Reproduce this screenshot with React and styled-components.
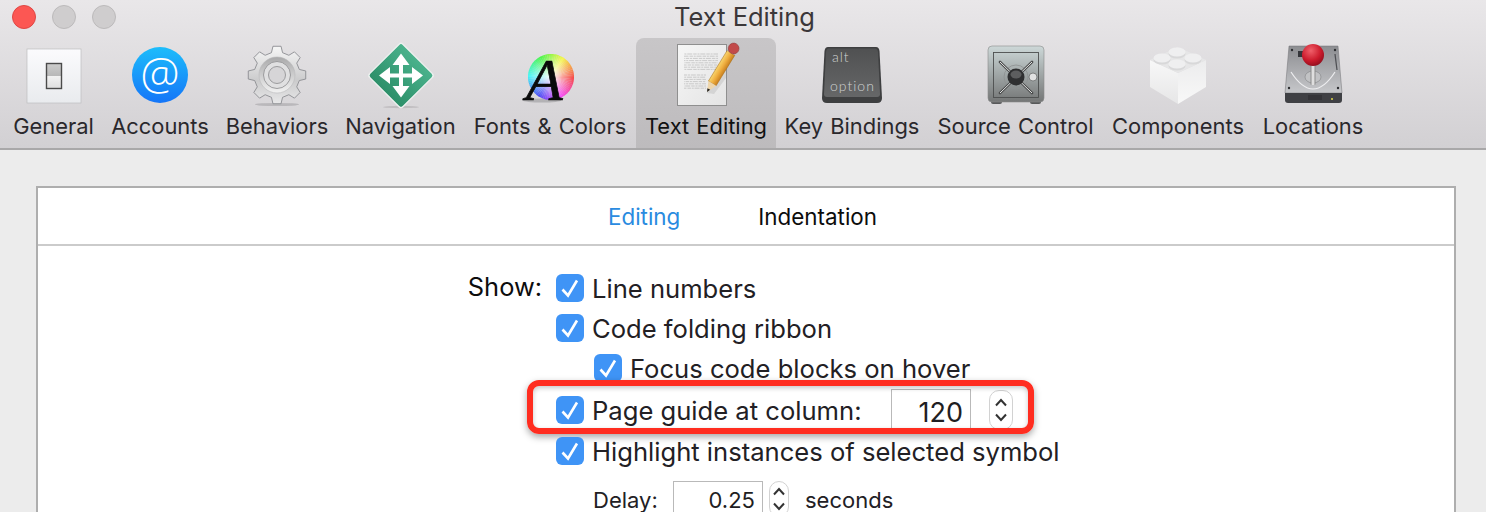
import React from 'react';
import styled, { createGlobalStyle } from 'styled-components';

const UI_FONT = `Inter, "Liberation Sans", sans-serif`;

const GlobalStyle = createGlobalStyle`
  html, body {
    margin: 0;
    height: 512px;
    overflow: hidden;
    background: #ececec;
    font-family: ${UI_FONT};
  }
`;

const Window = styled.div`
  width: 1486px;
  height: 512px;
  overflow: hidden;
  background: #ececec;
`;

const Toolbar = styled.header`
  height: 148px;
  background: linear-gradient(#e9e7e9, #d2d0d3);
  border-bottom: 2px solid #a9a8a9;
`;

const TitleBar = styled.div`
  height: 38px;
  display: grid;
  grid-template-columns: 1fr auto 1fr;
  align-items: center;
  padding: 0 9px 4px 12px;
  box-sizing: border-box;
`;

const Lights = styled.div`
  display: flex;
  gap: 16px;
`;

const Light = styled.span`
  width: 24px;
  height: 24px;
  border-radius: 50%;
  box-sizing: border-box;
  background: ${p => (p.$on ? '#fc5753' : '#cfcdce')};
  border: 1px solid ${p => (p.$on ? '#df4744' : '#bcbabb')};
`;

const Title = styled.h1`
  margin: 0 0 2px;
  font-size: 25.5px;
  font-weight: 400;
  color: #3b3739;
`;

const Tabs = styled.nav`
  display: flex;
  height: 110px;
  padding-left: 4px;
`;

const Tab = styled.div`
  width: ${p => p.$w}px;
  height: 110px;
  flex: none;
  display: flex;
  flex-direction: column;
  align-items: center;
  background: ${p => (p.$active ? 'linear-gradient(#c8c6c8, #bdbbbd)' : 'transparent')};
  border-radius: 8px 8px 0 0;
`;

const IconSvg = styled.svg`
  width: 64px;
  height: 64px;
  margin-top: 6px;
  flex: none;
  display: block;
  overflow: visible;
`;

const TabLabel = styled.span`
  margin-top: 3px;
  font-size: 21.9px;
  word-spacing: 1px;
  line-height: 30px;
  white-space: nowrap;
  color: ${p => (p.$active ? '#111' : '#2a282c')};
`;

const KeyText = styled.text`
  font-family: Lato, sans-serif;
  font-size: 14px;
  font-weight: 300;
  letter-spacing: 1px;
  fill: #d0d2d2;
`;

const AtText = styled.text`
  font-family: "Open Sans", sans-serif;
  font-size: 44px;
  font-weight: 300;
  fill: #fff;
`;

const SerifA = styled.text`
  font-family: "Liberation Serif", serif;
  font-size: 60px;
  font-style: italic;
  fill: #0a0a0a;
  stroke: #0a0a0a;
  stroke-width: 0.7px;
`;

const Panel = styled.section`
  margin: 36px 30px 0 36px;
  height: 400px;
  background: #fff;
  border: 2px solid #aeaeae;
  border-bottom: 0;
`;

const SegBar = styled.div`
  height: 56px;
  display: flex;
  align-items: center;
  padding-left: 570px;
  gap: 78px;
  border-bottom: 2px solid #cbcbcb;
`;

const Seg = styled.span`
  font-size: 22.4px;
  color: ${p => (p.$active ? '#2a8be0' : '#0c0c0c')};
`;

const Form = styled.div`
  display: grid;
  grid-template-columns: 504px 1fr;
  column-gap: 14px;
  padding-top: 22px;
`;

const FormLabel = styled.div`
  text-align: right;
  font-size: 25.4px;
  line-height: 38px;
  color: #0d0d0d;
`;

const Options = styled.div`
  display: flex;
  flex-direction: column;
`;

const Row = styled.div`
  position: relative;
  height: 40px;
  display: flex;
  align-items: center;
  gap: 8px;
  margin-top: ${p => p.$top || 0}px;
  padding-left: ${p => p.$indent || 0}px;
  font-size: 25.6px;
  color: #222024;
  white-space: nowrap;
`;

const Check = styled.span`
  width: 28px;
  height: 28px;
  flex: none;
  border-radius: 6px;
  background: #3f94f6;
`;

const CheckMark = styled.svg`
  width: 28px;
  height: 28px;
  display: block;
`;

const GuideLabel = styled.span`
  width: 291px;
`;

const NumberField = styled.div`
  width: ${p => p.$w}px;
  height: ${p => p.$h}px;
  box-sizing: border-box;
  flex: none;
  border: 1px solid #b9b9b9;
  background: #fff;
  display: flex;
  align-items: center;
  justify-content: flex-end;
  padding: ${p => p.$dy || 0}px 7px 0 0;
  font-size: ${p => p.$size}px;
  line-height: 24px;
  color: #1f1e22;
`;

const Stepper = styled.div`
  width: ${p => p.$w}px;
  height: ${p => p.$h}px;
  flex: none;
  box-sizing: border-box;
  margin-left: ${p => p.$gap}px;
  border: 1px solid #d2d2d2;
  border-radius: 10px;
  background: #fff;
  display: flex;
  flex-direction: column;
  align-items: center;
  justify-content: center;
  gap: 6px;
`;

const Chevron = styled.svg`
  width: 14px;
  height: 9px;
  display: block;
`;

const Callout = styled.div`
  position: absolute;
  left: -29px;
  top: -10px;
  width: 507px;
  height: 54px;
  box-sizing: border-box;
  border: 6px solid #ff2d20;
  border-radius: 12px;
  box-shadow: 0 3px 7px rgba(0, 0, 0, 0.35), inset 0 2px 5px rgba(0, 0, 0, 0.22);
  pointer-events: none;
`;

const DelayRow = styled.div`
  display: flex;
  align-items: flex-start;
  height: 31px;
  margin-top: 10px;
  padding-left: 37px;
  font-size: 22px;
  color: #222024;
`;

const DelayText = styled.span`
  line-height: 24px;
  margin-top: 7px;
  width: ${p => p.$w || 'auto'};
  margin-left: ${p => p.$gap || 0}px;
`;

const polar = (cx, cy, r, deg) => {
  const a = (deg * Math.PI) / 180;
  return `${(cx + r * Math.cos(a)).toFixed(2)},${(cy + r * Math.sin(a)).toFixed(2)}`;
};

const gearPoints = (() => {
  const pts = [];
  for (let i = 0; i < 8; i++) {
    const c = i * 45 - 90;
    pts.push(polar(32, 31, 23, c - 14), polar(32, 31, 29, c - 8), polar(32, 31, 29, c + 8), polar(32, 31, 23, c + 14));
  }
  return pts.join(' ');
})();

const IconGeneral = () => (
  <IconSvg viewBox="0 0 64 64">
    <defs>
      <linearGradient id="genBg" x1="0" y1="0" x2="0" y2="1">
        <stop offset="0" stopColor="#fbfbfd" />
        <stop offset="1" stopColor="#e9ebee" />
      </linearGradient>
      <linearGradient id="genSw" x1="0" y1="0" x2="0" y2="1">
        <stop offset="0" stopColor="#cdcdcd" />
        <stop offset="0.5" stopColor="#b8b8b8" />
        <stop offset="0.51" stopColor="#f2f2f2" />
        <stop offset="1" stopColor="#dedede" />
      </linearGradient>
    </defs>
    <rect x="5" y="5" width="54" height="54" fill="url(#genBg)" stroke="#bdbdbf" strokeWidth="0.7" />
    <rect x="24.5" y="19.5" width="15" height="25" fill="url(#genSw)" stroke="#4a4a4a" strokeWidth="1.4" />
  </IconSvg>
);

const IconAccounts = () => (
  <IconSvg viewBox="0 0 64 64">
    <defs>
      <linearGradient id="accBg" x1="0" y1="0" x2="0" y2="1">
        <stop offset="0" stopColor="#1dbdfb" />
        <stop offset="1" stopColor="#1475f8" />
      </linearGradient>
    </defs>
    <circle cx="32" cy="31" r="28" fill="url(#accBg)" />
    <AtText x="32" y="46" textAnchor="middle">@</AtText>
  </IconSvg>
);

const IconBehaviors = () => (
  <IconSvg viewBox="0 0 64 64">
    <defs>
      <linearGradient id="gearBg" x1="0" y1="0" x2="0" y2="1">
        <stop offset="0" stopColor="#f6f6f6" />
        <stop offset="0.6" stopColor="#cbcbcc" />
        <stop offset="1" stopColor="#e8e8e9" />
      </linearGradient>
      <linearGradient id="gearIn" x1="0" y1="0" x2="0" y2="1">
        <stop offset="0" stopColor="#a9a9aa" />
        <stop offset="1" stopColor="#f2f2f2" />
      </linearGradient>
    </defs>
    <ellipse cx="32" cy="60.5" rx="22" ry="1.6" fill="#a5a4a6" opacity="0.6" />
    <polygon points={gearPoints} fill="url(#gearBg)" stroke="#8b8c91" strokeWidth="0.9" strokeLinejoin="round" />
    <circle cx="32" cy="31" r="18" fill="url(#gearIn)" stroke="#b8b8ba" strokeWidth="0.6" />
    <circle cx="32" cy="31" r="13.5" fill="#e0e0e1" stroke="#949496" strokeWidth="0.9" />
    <circle cx="32" cy="31" r="8.5" fill="#d6d5d7" stroke="#949496" strokeWidth="0.9" />
  </IconSvg>
);

const IconNavigation = () => (
  <IconSvg viewBox="0 0 64 64">
    <defs>
      <linearGradient id="navBg" x1="0" y1="0" x2="0" y2="1">
        <stop offset="0" stopColor="#4ab28c" />
        <stop offset="1" stopColor="#2c8f69" />
      </linearGradient>
    </defs>
    <ellipse cx="32" cy="63" rx="18" ry="1.2" fill="#a5a4a6" opacity="0.5" />
    <rect x="8.5" y="8" width="47" height="47" rx="3" transform="rotate(45 32 31.5)" fill="url(#navBg)" stroke="#eef1f0" strokeWidth="1.4" />
    <path
      d="M32 9.5 L40.5 21 L34 21 L34 29.5 L43 29.5 L43 23 L54 31.5 L43 40 L43 33.5 L34 33.5 L34 42 L40.5 42 L32 53.5 L23.5 42 L30 42 L30 33.5 L21 33.5 L21 40 L10 31.5 L21 23 L21 29.5 L30 29.5 L30 21 L23.5 21 Z"
      fill="#fff"
    />
  </IconSvg>
);

const wedges = Array.from({ length: 72 }, (_, i) => {
  const from = i * 5 - 90;
  const hue = (90 - i * 5 + 360) % 360;
  return (
    <path
      key={i}
      d={`M33 33 L${polar(33, 33, 23, from)} A23 23 0 0 1 ${polar(33, 33, 23, from + 5.6)} Z`}
      fill={`hsl(${hue}, 90%, 62%)`}
    />
  );
});

const IconFonts = () => (
  <IconSvg viewBox="0 0 64 64">
    <defs>
      <radialGradient id="wheelWhite">
        <stop offset="0" stopColor="#fff" stopOpacity="0.95" />
        <stop offset="1" stopColor="#fff" stopOpacity="0" />
      </radialGradient>
    </defs>
    <ellipse cx="24" cy="56.5" rx="19" ry="2" fill="#8e8d8f" opacity="0.5" />
    {wedges}
    <circle cx="33" cy="33" r="23" fill="url(#wheelWhite)" />
    <SerifA x="8" y="56">A</SerifA>
  </IconSvg>
);

const paperLines = [10, 12.2, 14.4, 16.6, 18.8, 21, 23.2, 25.4, 31, 33.2, 35.4, 37.6, 39.8, 42, 44.2];

const IconTextEditing = () => (
  <IconSvg viewBox="0 0 64 64">
    <defs>
      <linearGradient id="paperBg" x1="0" y1="0" x2="1" y2="1">
        <stop offset="0" stopColor="#f6f6f6" />
        <stop offset="1" stopColor="#e4e4e4" />
      </linearGradient>
      <linearGradient id="pencilBody" x1="0" y1="0" x2="1" y2="0">
        <stop offset="0" stopColor="#f8d56e" />
        <stop offset="0.5" stopColor="#efae3f" />
        <stop offset="1" stopColor="#c9801f" />
      </linearGradient>
    </defs>
    <rect x="3.5" y="0.5" width="49" height="61" fill="url(#paperBg)" stroke="#8f8f8f" strokeWidth="1" />
    {paperLines.map(y => (
      <line
        key={y}
        x1="10"
        x2={y > 30 ? 32 : 44}
        y1={y}
        y2={y}
        stroke="#b0b0b0"
        strokeWidth="0.6"
        strokeDasharray="3.5 0.8 2 0.8 5 1"
        strokeDashoffset={y * 1.7}
      />
    ))}
    <polygon points="33,49 52,18 52,34 40,50" fill="#a7a7a7" opacity="0.3" />
    <g transform="rotate(31.5 33 48)">
      <rect x="28.5" y="2" width="9" height="36" fill="url(#pencilBody)" stroke="#a8701c" strokeWidth="0.5" />
      <rect x="28.5" y="-1.5" width="9" height="3.5" fill="#b9b9b9" />
      <polygon points="28.5,38 37.5,38 33,48" fill="#eed6ac" />
      <polygon points="31.4,44.5 34.6,44.5 33,48" fill="#222" />
      <circle cx="33" cy="-3" r="5.4" fill="#c24a4a" stroke="#8f3434" strokeWidth="0.5" />
    </g>
  </IconSvg>
);

const IconKeys = () => (
  <IconSvg viewBox="0 0 64 64">
    <defs>
      <linearGradient id="keyFace" x1="0" y1="0" x2="0" y2="1">
        <stop offset="0" stopColor="#505152" />
        <stop offset="1" stopColor="#666768" />
      </linearGradient>
    </defs>
    <path d="M8 3 H56 Q59 3 59.5 7 L62 54 Q62 59 57 59 H7 Q2 59 2 54 L4.5 7 Q5 3 8 3 Z" fill="#3e3f40" />
    <path d="M9 4.5 H55 Q57.5 4.5 58 8 L60 50 Q60 53 57 53 H7 Q4 53 4 50 L6 8 Q6.5 4.5 9 4.5 Z" fill="url(#keyFace)" />
    <KeyText x="12" y="18">alt</KeyText>
    <KeyText x="10" y="47">option</KeyText>
  </IconSvg>
);

const IconSafe = () => (
  <IconSvg viewBox="0 0 64 64">
    <defs>
      <linearGradient id="safeBg" x1="0" y1="0" x2="0" y2="1">
        <stop offset="0" stopColor="#cdd8d8" />
        <stop offset="1" stopColor="#747676" />
      </linearGradient>
    </defs>
    <rect x="7" y="55" width="11" height="5" rx="2" fill="#58595a" />
    <rect x="46" y="55" width="11" height="5" rx="2" fill="#58595a" />
    <rect x="4" y="2" width="56" height="56" rx="4" fill="url(#safeBg)" stroke="#8a8c8c" strokeWidth="0.6" />
    <rect x="9.5" y="8.5" width="45" height="45" fill="none" stroke="#4d4f4f" strokeWidth="0.9" />
    <circle cx="32" cy="33" r="12" fill="none" stroke="#8d9090" strokeWidth="0.8" />
    <g stroke="#4a4b4b" strokeWidth="2.6" strokeLinecap="round">
      <line x1="16" y1="18" x2="48" y2="49" />
      <line x1="48" y1="18" x2="16" y2="49" />
    </g>
    <g stroke="#e2e4e4" strokeWidth="1">
      <line x1="16" y1="18" x2="48" y2="49" />
      <line x1="48" y1="18" x2="16" y2="49" />
    </g>
    <circle cx="32" cy="33" r="8.5" fill="#2f3031" />
    <ellipse cx="32" cy="30.5" rx="5.5" ry="4" fill="#5d5e5f" />
    <circle cx="49" cy="33" r="4" fill="#e1e2e2" stroke="#6b6d6d" strokeWidth="0.8" />
  </IconSvg>
);

const studs = [[31, 8], [16, 14], [47, 14], [31, 20]];

const IconComponents = () => (
  <IconSvg viewBox="0 0 64 64">
    <defs>
      <linearGradient id="brickL" x1="0" y1="0" x2="0" y2="1">
        <stop offset="0" stopColor="#f8f8f8" />
        <stop offset="1" stopColor="#e6e6e7" />
      </linearGradient>
      <linearGradient id="brickR" x1="0" y1="0" x2="0" y2="1">
        <stop offset="0" stopColor="#ececed" />
        <stop offset="1" stopColor="#f8f8f8" />
      </linearGradient>
    </defs>
    <polygon points="4,16 32,29 32,60 4,43" fill="url(#brickL)" />
    <polygon points="60,16 32,29 32,60 60,43" fill="url(#brickR)" />
    <polygon points="4,16 32,3 60,16 32,29" fill="#e6e6e7" />
    {studs.map(([x, y]) => (
      <g key={`${x}-${y}`}>
        <ellipse cx={x} cy={y + 2} rx="8.5" ry="4.5" fill="#d8d8d9" />
        <ellipse cx={x} cy={y} rx="8.5" ry="4.5" fill="#efeff0" />
      </g>
    ))}
  </IconSvg>
);

const IconLocations = () => (
  <IconSvg viewBox="0 0 64 64">
    <defs>
      <linearGradient id="hddBg" x1="0" y1="0" x2="0" y2="1">
        <stop offset="0" stopColor="#8c8d91" />
        <stop offset="1" stopColor="#c6c7ca" />
      </linearGradient>
      <radialGradient id="ball" cx="0.4" cy="0.3" r="0.75">
        <stop offset="0" stopColor="#f0606a" />
        <stop offset="0.6" stopColor="#cc1b2c" />
        <stop offset="1" stopColor="#8c0d1c" />
      </radialGradient>
      <linearGradient id="stick" x1="0" y1="0" x2="1" y2="0">
        <stop offset="0" stopColor="#8b8b8b" />
        <stop offset="0.5" stopColor="#f4f4f4" />
        <stop offset="1" stopColor="#8b8b8b" />
      </linearGradient>
    </defs>
    <polygon points="8,2 57,2 61,49 4,49" fill="url(#hddBg)" stroke="#707175" strokeWidth="0.5" />
    <path d="M4 49 H61 L61 56 Q61 59 58 59 H7 Q4 59 4 56 Z" fill="#3f4044" />
    <g stroke="#202124" strokeWidth="0.7">
      {[28, 30, 32, 34, 36, 38, 40].map(x => (
        <line key={x} x1={x} x2={x} y1="51" y2="56" />
      ))}
    </g>
    <circle cx="51" cy="55" r="1" fill="#e0d84a" />
    <path d="M10 28 Q32 62 54 28" fill="none" stroke="#eeeef0" strokeWidth="1.2" />
    <ellipse cx="32" cy="33" rx="8" ry="6" fill="#c2c3c5" stroke="#77787b" strokeWidth="0.5" />
    <rect x="17" y="7" width="8" height="6" fill="#34353a" />
    <line x1="54" y1="10" x2="56" y2="26" stroke="#4e4f53" strokeWidth="1.2" />
    <circle cx="11" cy="6" r="1.2" fill="#2d2e31" />
    <circle cx="54" cy="6" r="1.2" fill="#2d2e31" />
    <circle cx="8" cy="44" r="1.2" fill="#2d2e31" />
    <circle cx="57" cy="44" r="1.2" fill="#2d2e31" />
    <rect x="29.5" y="18" width="5" height="23" rx="1" fill="url(#stick)" />
    <circle cx="32" cy="11" r="11" fill="url(#ball)" />
  </IconSvg>
);

const tabs = [
  { label: 'General', w: 99, Icon: IconGeneral },
  { label: 'Accounts', w: 114, Icon: IconAccounts },
  { label: 'Behaviors', w: 120, Icon: IconBehaviors },
  { label: 'Navigation', w: 127, Icon: IconNavigation },
  { label: 'Fonts & Colors', w: 172, Icon: IconFonts },
  { label: 'Text Editing', w: 140, Icon: IconTextEditing, active: true },
  { label: 'Key Bindings', w: 152, Icon: IconKeys },
  { label: 'Source Control', w: 175, Icon: IconSafe },
  { label: 'Components', w: 150, Icon: IconComponents },
  { label: 'Locations', w: 120, Icon: IconLocations },
];

const Box = () => (
  <Check>
    <CheckMark viewBox="0 0 28 28">
      <path d="M6.5 15.5 L12 21.5 L21 6.5" fill="none" stroke="#fff" strokeWidth="2.6" />
    </CheckMark>
  </Check>
);

const StepArrows = () => (
  <>
    <Chevron viewBox="0 0 14 9">
      <path d="M2 7.5 L7 2 L12 7.5" fill="none" stroke="#333" strokeWidth="2" />
    </Chevron>
    <Chevron viewBox="0 0 14 9">
      <path d="M2 1.5 L7 7 L12 1.5" fill="none" stroke="#333" strokeWidth="2" />
    </Chevron>
  </>
);

const App = () => (
  <Window>
    <GlobalStyle />
    <Toolbar>
      <TitleBar>
        <Lights>
          <Light $on />
          <Light />
          <Light />
        </Lights>
        <Title>Text Editing</Title>
      </TitleBar>
      <Tabs>
        {tabs.map(({ label, w, Icon, active }) => (
          <Tab key={label} $w={w} $active={active}>
            <Icon />
            <TabLabel $active={active}>{label}</TabLabel>
          </Tab>
        ))}
      </Tabs>
    </Toolbar>
    <Panel>
      <SegBar>
        <Seg $active>Editing</Seg>
        <Seg>Indentation</Seg>
      </SegBar>
      <Form>
        <FormLabel>Show:</FormLabel>
        <Options>
          <Row><Box />Line numbers</Row>
          <Row><Box />Code folding ribbon</Row>
          <Row $indent={38}><Box />Focus code blocks on hover</Row>
          <Row $top={2}>
            <Box />
            <GuideLabel>Page guide at column:</GuideLabel>
            <NumberField $w={80} $h={42} $size={27} $dy={5}>120</NumberField>
            <Stepper $w={24} $h={40} $gap={10}><StepArrows /></Stepper>
            <Callout />
          </Row>
          <Row $top={1}><Box />Highlight instances of selected symbol</Row>
          <DelayRow>
            <DelayText $w="80px">Delay:</DelayText>
            <NumberField $w={90} $h={38} $size={22}>0.25</NumberField>
            <Stepper $w={20} $h={36} $gap={6}><StepArrows /></Stepper>
            <DelayText $gap={16}>seconds</DelayText>
          </DelayRow>
        </Options>
      </Form>
    </Panel>
  </Window>
);

export default App;
